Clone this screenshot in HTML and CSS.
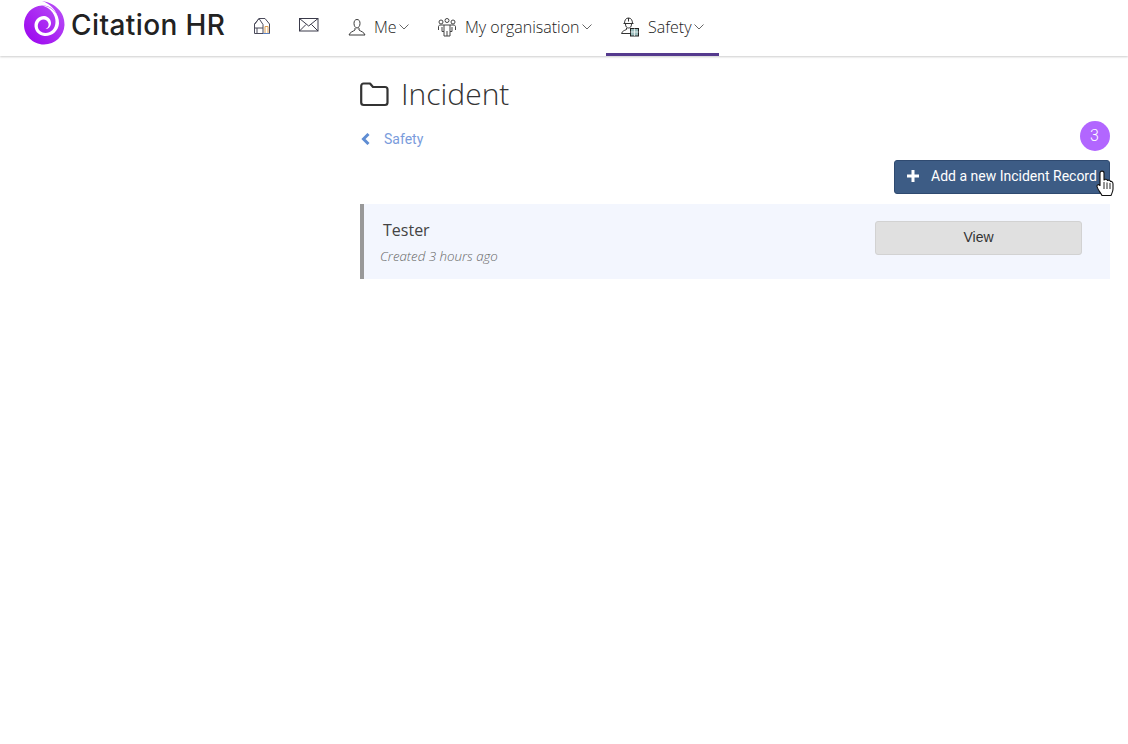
FILE: index.html
```html
<!DOCTYPE html>
<html lang="en">
<head>
<meta charset="utf-8">
<title>Incident</title>
<link rel="stylesheet" href="styles.css">
</head>
<body>
<header class="topbar">
  <a class="brand">
    <svg class="brand-mark" viewBox="0 0 44 46" width="44" height="46">
      <defs>
        <linearGradient id="sw" x1="0" y1="1" x2="1" y2="0">
          <stop offset="0" stop-color="#9a00ee"/><stop offset="1" stop-color="#bb55f7"/>
        </linearGradient>
      </defs>
      <path fill="url(#sw)" d="M19 1C32 3 42 12 41.500 25C41 36 32 44.500 21 44.500C9.500 44.500 1 35 1 25C1 14 9 6 19 5.500C27 5 34 11 35 19C34 11 28 4 19 1Z"/>
      <path fill="#fff" d="M19 5.500C29 6 36.500 14 36 23.500C35.500 31 29 36.500 21.500 36C15 35.500 11 30 11.500 24.500C12 19.500 16.500 15.500 21.500 16C25.500 16.500 28.500 20 28 24C27.500 27 25 29 22.500 29C25 28 26 25.500 25.500 23.500C24.500 20 20.500 18.500 17.500 20.500C14 23 14 28 17 31C20.500 34 26 33.500 29.500 30C33.500 25.500 33.500 18 29.500 12.500C27 9 23 6.500 19 5.500Z"/>
    </svg>
    <span class="brand-name">Citation HR</span>
  </a>
  <nav class="nav">
    <a class="nav-item icon-only home">
      <svg viewBox="0 0 18 18" width="18" height="18" fill="none" stroke="#4a4a5a" stroke-width="1"><path d="M1.500 16.500V7L6 1.500H12L16.500 7V16.500Z"/><path d="M1.500 7.500 6 1.500 10 7.500V16.500"/><path d="M1.500 11H10"/><path d="M4 11V16.500"/><path d="M12 9.500H15V16.500H12Z" stroke="#e0a050"/><path d="M10 16.500H16.500" stroke="#5a80c0"/></svg>
    </a>
    <a class="nav-item icon-only mail">
      <svg viewBox="0 0 20 14" width="20" height="14" fill="none" stroke="#3a3a4a" stroke-width="1"><rect x=".5" y=".5" width="18.500" height="12.500"/><path d="M.5.5 9.700 8 19 .5M.5 13 7 6.500M19 13 12.500 6.500"/></svg>
    </a>
    <a class="nav-item me">
      <svg viewBox="0 0 18 18" width="18" height="18" fill="none" stroke="#3a3a3a" stroke-width="1"><path d="M6 5.500C6 3 7 1.500 9 1.500S12 3 12 5.500 10.500 10 9 10 6 8 6 5.500Z"/><path d="M7 10V12C5 13.500 2 14 1 17H17C16 14 13 13.500 11 12V10"/></svg>
      <span class="nav-label">Me</span>
      <svg class="caret" viewBox="0 0 10 6" width="10" height="6"><path d="M.5.5 5 5 9.500.5" fill="none" stroke="#666" stroke-width="1"/></svg>
    </a>
    <a class="nav-item org">
      <svg viewBox="0 0 20 20" width="20" height="20" fill="none" stroke="#444" stroke-width="1"><circle cx="4" cy="5" r="2"/><circle cx="10" cy="3.500" r="2"/><circle cx="16" cy="5" r="2"/><path d="M1.500 13V9.500C1.500 8.500 2.500 8 4 8H16C17.500 8 18.500 8.500 18.500 9.500V13"/><path d="M5 10V14.500H7V19H13V14.500H15V10"/><path d="M7 8V14.500M13 8V14.500M10 14V19"/></svg>
      <span class="nav-label">My organisation</span>
      <svg class="caret" viewBox="0 0 10 6" width="10" height="6"><path d="M.5.5 5 5 9.500.5" fill="none" stroke="#666" stroke-width="1"/></svg>
    </a>
    <a class="nav-item safety active">
      <svg viewBox="0 0 20 20" width="20" height="20" fill="none" stroke="#333" stroke-width="1"><path d="M4.500 6.500C4.500 3 6 1 8.500 1S12.500 3 12.500 6.500"/><path d="M3.500 6.500H13.500M8.500 1V4.500M5.500 7C5.500 10 7 11 8.500 11S11.500 10 11.500 7"/><path d="M6.500 11V12.500C4 13.500 2 14.500 1.500 16.500H10"/><rect x="10.500" y="11.500" width="8" height="7.500" fill="#9bb" stroke="#222"/><path d="M14.500 11.500V19M10.500 15H18.500" stroke="#fff" stroke-width=".7"/></svg>
      <span class="nav-label">Safety</span>
      <svg class="caret" viewBox="0 0 10 6" width="10" height="6"><path d="M.5.5 5 5 9.500.5" fill="none" stroke="#666" stroke-width="1"/></svg>
    </a>
  </nav>
</header>

<main class="content">
  <h1 class="page-title">
    <svg viewBox="0 0 29 26" width="29" height="26" fill="none" stroke="#333" stroke-width="2.200"><path d="M1.200 5C1.200 3.500 2.200 2.500 3.700 2.500H10L13 6H25C26.500 6 27.500 7 27.500 8.500V21.500C27.500 23 26.500 24 25 24H3.700C2.200 24 1.200 23 1.200 21.500Z" stroke-linejoin="round"/></svg>
    <span>Incident</span>
  </h1>
  <div class="crumb-row">
    <a class="back">
      <svg viewBox="0 0 9 12" width="9" height="12"><path d="M7.500 1 2.500 6 7.500 11" fill="none" stroke="#5f8dd3" stroke-width="3"/></svg>
      <span>Safety</span>
    </a>
    <span class="badge">3</span>
  </div>
  <div class="actions">
    <a class="btn-primary">
      <svg viewBox="0 0 12 12" width="12" height="12"><path d="M6 0V12M0 6H12" stroke="#fff" stroke-width="3"/></svg>
      <span>Add a new Incident Record</span>
    </a>
    <svg class="cursor" viewBox="0 0 18 26" width="18" height="26"><path d="M4 3C4 .5 8 .5 8 3V10C9 9 11 9 11.500 10.500C12.500 9.800 14 10 14.500 11.500C16 11 17 12.500 17 14V19C17 22 15.500 24 15 25.500H6C5 23 1.500 19.500 1 16.500C.8 14.500 2.500 14 4 15.500Z" fill="#fff" stroke="#111" stroke-width="1.100" stroke-linejoin="round"/><path d="M8 12V19M11 12.500V19M14 13V19" stroke="#111" stroke-width=".9"/></svg>
  </div>
  <article class="record">
    <div class="record-text">
      <h2>Tester</h2>
      <p>Created 3 hours ago</p>
    </div>
    <a class="btn-view">View</a>
  </article>
</main>
</body>
</html>
```
FILE: styles.css
```css
* { box-sizing: border-box; }
html, body { margin: 0; height: 100%; background: #fff; }
body { font-family: "Open Sans", sans-serif; color: #333; overflow: hidden; }

.topbar {
  display: flex;
  align-items: stretch;
  height: 56px;
  padding-left: 23px;
  background: #fff;
  box-shadow: 0 1px 2px rgba(0,0,0,.2);
}
.brand { display: flex; align-items: center; gap: 4px; width: 222px; height: 46px; }
.brand-mark { flex: none; }
.brand-name {
  margin-top: 3px;
  font-family: Inter, sans-serif;
  font-weight: 500;
  font-size: 28px;
  letter-spacing: .4px;
  color: #222;
  white-space: nowrap;
}
.nav { display: flex; align-items: stretch; margin-left: -1px; }
.nav-item {
  display: flex;
  align-items: center;
  height: 56px;
  border-bottom: 3px solid transparent;
  font-weight: 300;
  font-size: 16px;
  color: #222;
}
.nav-label { white-space: nowrap; }
.nav-item.icon-only { padding-bottom: 1px; }
.home { margin-left: 9px; width: 46px; }
.mail { width: 48px; padding-bottom: 3px !important; }
.me { width: 90px; gap: 8px; }
.me svg:first-child { margin-left: 1px; margin-top: 1px; }
.me .nav-label { margin-right: -6px; }
.org { width: 169px; }
.org svg:first-child { margin-right: 8px; }
.org .caret { margin-left: 2px; }
.safety { width: 113px; padding-left: 14px; }
.safety svg:first-child { margin-right: 8px; }
.safety .caret { margin-left: 2px; }
.active { border-bottom-color: #553a8e; }
.caret { flex: none; }

.content { width: 750px; margin-left: 360px; }
.page-title {
  display: flex;
  align-items: center;
  gap: 12px;
  margin: 0;
  height: 76px;
  font-weight: 300;
  font-size: 30px;
  line-height: 36px;
  color: #333;
}
.crumb-row {
  display: flex;
  justify-content: space-between;
  align-items: center;
  height: 30px;
  margin-top: -11px;
}
.back {
  display: flex;
  align-items: center;
  gap: 14px;
  padding-left: 1px;
  padding-top: 5px;
  font-family: Roboto, sans-serif;
  font-size: 14px;
  color: #7a9cdc;
}
.badge {
  display: flex;
  align-items: center;
  justify-content: center;
  width: 30px;
  height: 30px;
  border-radius: 50%;
  background: #b266ff;
  color: #fff;
  font-family: Roboto, sans-serif;
  font-size: 16px;
  font-weight: 300;
  padding-right: 1px;
  padding-bottom: 2px;
}
.actions { position: relative; display: flex; justify-content: flex-end; margin-top: 9px; }
.btn-primary {
  display: flex;
  align-items: center;
  gap: 12px;
  width: 216px;
  height: 34px;
  padding-left: 12px;
  padding-bottom: 2px;
  border: 1px solid #2f4a70;
  border-radius: 3px;
  background: #3d5c85;
  color: #fff;
  font-family: Roboto, sans-serif;
  font-size: 14px;
  white-space: nowrap;
}
.cursor { position: absolute; right: -4px; top: 10px; }
.record {
  display: flex;
  align-items: flex-start;
  justify-content: space-between;
  height: 75px;
  margin-top: 10px;
  padding: 17px 28px 0 16px;
  border-left: 4px solid #999;
  background: #f3f6fe;
}
.record-text h2 {
  margin: -2px 0 0 3px;
  font-weight: 400;
  font-size: 16px;
  line-height: 22px;
  color: #444;
}
.record-text p {
  margin: 6px 0 0;
  font-style: italic;
  font-weight: 300;
  font-size: 13.3px;
  line-height: 18px;
  color: #666;
}
.btn-view {
  display: flex;
  align-items: center;
  justify-content: center;
  width: 207px;
  height: 34px;
  padding-bottom: 2px;
  border: 1px solid #d2d2d2;
  border-radius: 3px;
  background: #e0e0e0;
  font-family: "Liberation Sans", sans-serif;
  font-size: 14px;
  color: #333;
}
```
